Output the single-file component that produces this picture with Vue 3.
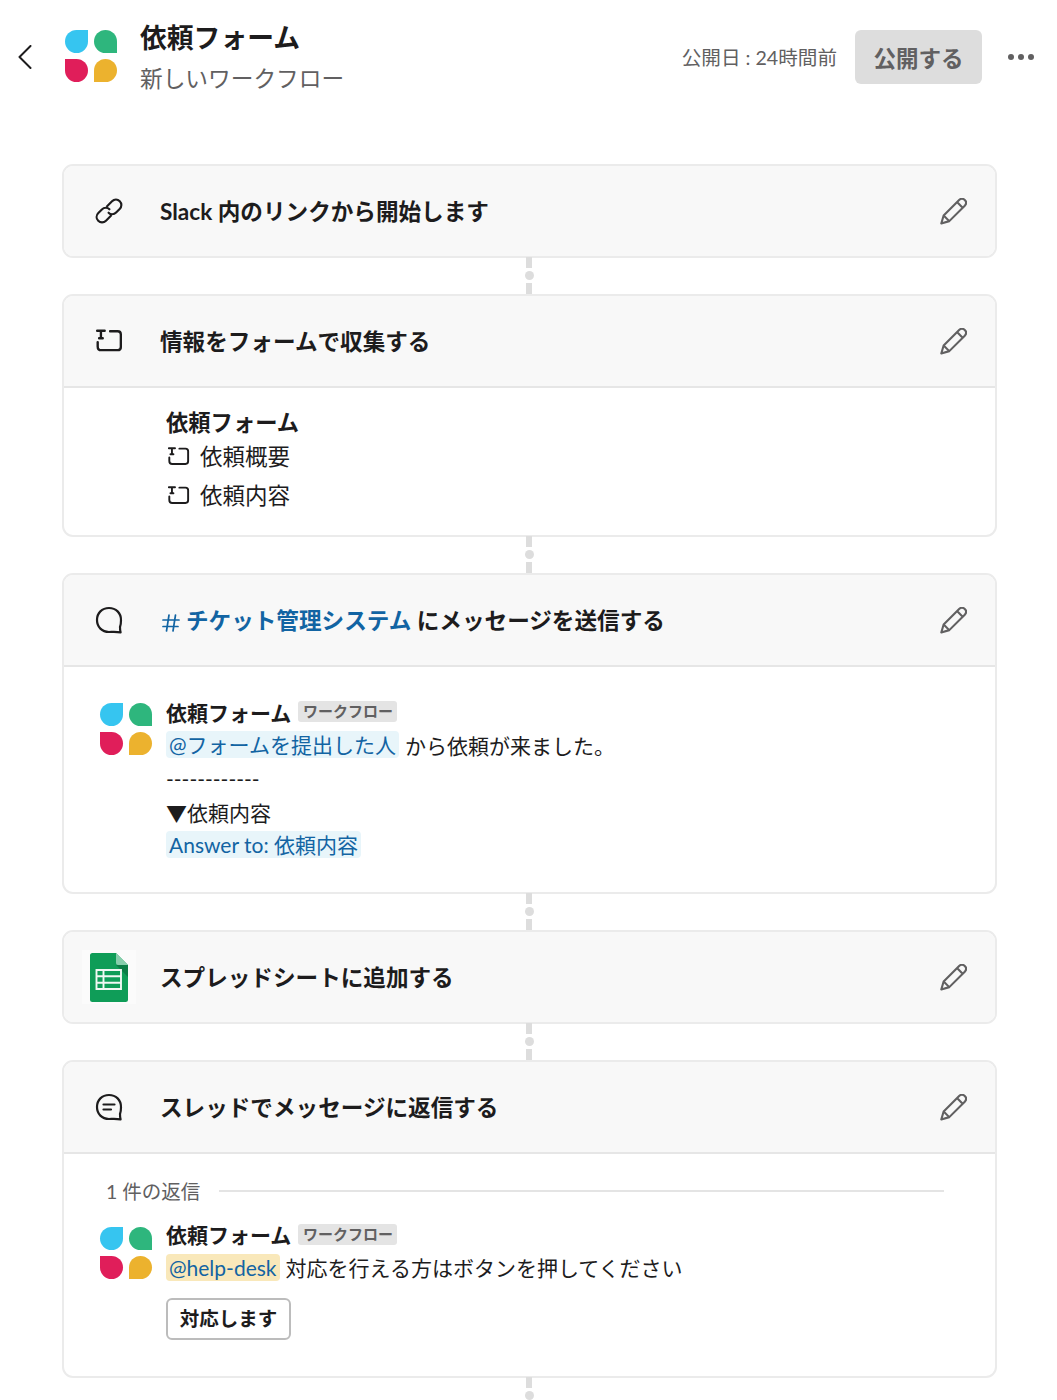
<script setup>
const logoParts = ['blue', 'green', 'red', 'yellow']
const pencilPath = 'M3 23.2 L5 16.4 L18.2 3.2 C19.6 1.8 21.6 1.8 23 3.2 C24.4 4.6 24.4 6.6 23 8 L9.8 21.2 Z M16.4 5 L21.2 9.8 M5 16.4 L9.8 21.2'
const formPath = 'M2 2.5 H9 M5.5 2.5 V9.5 M3.8 9.5 H7.2 M2.5 13 V17 C2.5 19.2 3.6 20.5 5.8 20.5 H21 C23 20.5 24 19.5 24 17.5 V6 C24 4 23 3 21 3 H14'
</script>

<template>
  <div class="page">
    <header class="top">
      <svg class="back" width="14" height="24" viewBox="0 0 14 24" fill="none">
        <path d="M12.5 1 L1.5 12 L12.5 23" stroke="#1d1c1d" stroke-width="2" stroke-linecap="round" stroke-linejoin="round" />
      </svg>
      <div class="logo">
        <i v-for="p in logoParts" :key="p" :class="p"></i>
      </div>
      <div class="app-names">
        <div class="app-name">依頼フォーム</div>
        <div class="app-sub">新しいワークフロー</div>
      </div>
      <div class="date">公開日 : 24時間前</div>
      <button class="publish"><span>公開する</span></button>
      <div class="dots"><i></i><i></i><i></i></div>
    </header>

    <section class="card">
      <div class="head">
        <svg class="ico" width="28" height="28" viewBox="1 1 26 26" fill="none" stroke="#1d1c1d" stroke-width="2" stroke-linecap="round">
          <path d="M12.2 9.6 L16.8 5 C18.9 2.9 22 2.9 24 4.9 C26 6.9 26 10 23.9 12.1 L20.6 15.4 C18.500 17.500 15.400 17.500 13.600 15.600" />
          <path d="M15.800 18.400 L11.200 23 C9.100 25.100 6 25.100 4 23.100 C2 21.100 2 18 4.100 15.900 L7.400 12.600 C9.500 10.500 12.600 10.500 14.400 12.400" />
        </svg>
        <div class="title">Slack 内のリンクから開始します</div>
        <svg class="pen" width="27" height="27" viewBox="2 1.500 22.800 23" fill="none" stroke="#616061" stroke-width="1.800" stroke-linejoin="round"><path :d="pencilPath" /></svg>
      </div>
    </section>
    <div class="link"><i></i><b></b><i></i></div>

    <section class="card">
      <div class="head ruled">
        <svg class="ico" width="28" height="28" viewBox="0 0 26 24" fill="none" stroke="#1d1c1d" stroke-width="2.200" stroke-linecap="round"><path :d="formPath" /></svg>
        <div class="title">情報をフォームで収集する</div>
        <svg class="pen" width="27" height="27" viewBox="2 1.500 22.800 23" fill="none" stroke="#616061" stroke-width="1.800" stroke-linejoin="round"><path :d="pencilPath" /></svg>
      </div>
      <div class="form-body">
        <div class="form-name">依頼フォーム</div>
        <div class="field">
          <svg width="23" height="21" viewBox="0 0 26 24" fill="none" stroke="#1d1c1d" stroke-width="2.200" stroke-linecap="round"><path :d="formPath" /></svg>
          <span>依頼概要</span>
        </div>
        <div class="field">
          <svg width="23" height="21" viewBox="0 0 26 24" fill="none" stroke="#1d1c1d" stroke-width="2.200" stroke-linecap="round"><path :d="formPath" /></svg>
          <span>依頼内容</span>
        </div>
      </div>
    </section>
    <div class="link"><i></i><b></b><i></i></div>

    <section class="card">
      <div class="head ruled">
        <svg class="ico" width="28" height="28" viewBox="0 0 28 28" fill="none" stroke="#1d1c1d" stroke-width="2.200" stroke-linejoin="round">
          <path d="M14 2 C7 2 2 7 2 14 C2 21 7 26 14 26 C17 26 20 25.400 25.600 26.400 C25 24.400 25 22.600 25 21 C25.800 19 26 16.600 26 14 C26 7 21 2 14 2 Z" />
        </svg>
        <div class="title">
          <span class="chan"><svg class="hash" width="18" height="18" viewBox="0 0 18 18" fill="none" stroke="#1264a3" stroke-width="1.700" stroke-linecap="round"><path d="M1 6 H17 M1 12.500 H16 M7 1 L4.500 17 M13.500 1 L11 17" /></svg>チケット管理システム</span> にメッセージを送信する
        </div>
        <svg class="pen" width="27" height="27" viewBox="2 1.500 22.800 23" fill="none" stroke="#616061" stroke-width="1.800" stroke-linejoin="round"><path :d="pencilPath" /></svg>
      </div>
      <div class="msg-body">
        <div class="msg">
          <div class="logo">
            <i v-for="p in logoParts" :key="p" :class="p"></i>
          </div>
          <div class="msg-text">
            <div class="line"><strong>依頼フォーム</strong><span class="badge">ワークフロー</span></div>
            <div class="line"><span class="mention">@フォームを提出した人</span><span class="after">から依頼が来ました。</span></div>
            <div class="line">------------</div>
            <div class="line">▼依頼内容</div>
            <div class="line"><span class="mention">Answer to: 依頼内容</span></div>
          </div>
        </div>
      </div>
    </section>
    <div class="link"><i></i><b></b><i></i></div>

    <section class="card">
      <div class="head">
        <div class="sheet-wrap">
          <svg width="38" height="49" viewBox="0 0 38 49">
            <path d="M2.500 0 H26 L38 12 V46.500 A2.500 2.500 0 0 1 35.500 49 H2.500 A2.500 2.500 0 0 1 0 46.500 V2.500 A2.500 2.500 0 0 1 2.500 0 Z" fill="#0f9d58" />
            <path d="M26 12 L38 24 V12 Z" fill="#0b7d46" />
            <path d="M26 0 L38 12 H28 A2 2 0 0 1 26 10 Z" fill="#87ceac" />
            <path d="M6.500 17 H31 V36 H6.500 Z M6.500 23.300 H31 M6.500 29.700 H31 M13.500 17 V36" fill="none" stroke="#f1f8f4" stroke-width="1.900" />
          </svg>
        </div>
        <div class="title">スプレッドシートに追加する</div>
        <svg class="pen" width="27" height="27" viewBox="2 1.500 22.800 23" fill="none" stroke="#616061" stroke-width="1.800" stroke-linejoin="round"><path :d="pencilPath" /></svg>
      </div>
    </section>
    <div class="link"><i></i><b></b><i></i></div>

    <section class="card">
      <div class="head ruled">
        <svg class="ico" width="28" height="28" viewBox="0 0 28 28" fill="none" stroke="#1d1c1d" stroke-width="2.200" stroke-linejoin="round" stroke-linecap="round">
          <path d="M14 2 C7 2 2 7 2 14 C2 21 7 26 14 26 C17 26 20 25.400 25.600 26.400 C25 24.400 25 22.600 25 21 C25.800 19 26 16.600 26 14 C26 7 21 2 14 2 Z" />
          <path d="M8.500 11.500 H19.500 M8.500 16.500 H16" />
        </svg>
        <div class="title">スレッドでメッセージに返信する</div>
        <svg class="pen" width="27" height="27" viewBox="2 1.500 22.800 23" fill="none" stroke="#616061" stroke-width="1.800" stroke-linejoin="round"><path :d="pencilPath" /></svg>
      </div>
      <div class="reply-body">
        <div class="reply-count"><span>1 件の返信</span><hr /></div>
        <div class="msg">
          <div class="logo">
            <i v-for="p in logoParts" :key="p" :class="p"></i>
          </div>
          <div class="msg-text">
            <div class="line"><strong>依頼フォーム</strong><span class="badge">ワークフロー</span></div>
            <div class="line"><span class="mention warm">@help-desk</span><span class="after">対応を行える方はボタンを押してください</span></div>
            <button class="action">対応します</button>
          </div>
        </div>
      </div>
    </section>
    <div class="link"><i></i><b></b><i></i></div>
  </div>
</template>

<style scoped>
.page {
  box-sizing: border-box;
  width: 1057px;
  height: 1400px;
  overflow: hidden;
  padding: 0 60px 0 62px;
  background: #fff;
  color: #1d1c1d;
  font-family: "Lato", "Noto Sans CJK JP", sans-serif;
}
.top {
  display: flex;
  align-items: center;
  height: 114px;
  margin: 0 -37px 50px -44px;
}
.back { flex: none; }
.logo {
  flex: none;
  display: grid;
  grid-template-columns: 23px 23px;
  grid-auto-rows: 23px;
  gap: 6px;
}
.logo i { display: block; border-radius: 50%; }
.logo .blue { background: #36c5f0; border-top-right-radius: 0; }
.logo .green { background: #2eb67d; border-bottom-right-radius: 0; }
.logo .red { background: #e01e5a; border-top-left-radius: 0; }
.logo .yellow { background: #ecb22e; border-bottom-left-radius: 0; }
.top .logo { margin: -3px 0 0 33px; }
.app-names { margin-left: 23px; flex: 1; padding-top: 3px; }
.app-name { font-size: 26.800px; font-weight: 700; line-height: 38px; }
.app-sub { font-size: 22.700px; line-height: 38px; margin-top: 3px; color: #616061; }
.date { font-size: 19.600px; color: #616061; white-space: nowrap; padding-bottom: 2px; }
.publish {
  width: 127px;
  height: 54px;
  margin-left: 18px;
  padding: 0 0 1px;
  border: none;
  border-radius: 6px;
  background: #dddddd;
  color: #616061;
  font: 700 22.500px "Lato", "Noto Sans CJK JP", sans-serif;
}
.dots { display: flex; gap: 4px; margin-left: 26px; width: 26px; }
.dots i { width: 6px; height: 6px; border-radius: 50%; background: #616061; flex: none; }
.card {
  border: 2px solid #ebebeb;
  border-radius: 11px;
  overflow: hidden;
  background: #fff;
}
.head {
  box-sizing: border-box;
  display: flex;
  align-items: center;
  height: 90px;
  padding: 0 28px 0 31px;
  background: #f8f8f8;
}
.head.ruled { height: 92px; border-bottom: 2px solid #e6e6e6; }
.ico { flex: none; }
.title { flex: 1; margin: 0 0 1px 37px; font-size: 22.600px; font-weight: 700; white-space: nowrap; }
.pen { flex: none; }
.chan { color: #1264a3; }
.hash { margin: 0 6px 0 2px; vertical-align: -3px; }
.sheet-wrap {
  flex: none;
  width: 54px;
  height: 54px;
  margin: 0 -13px;
  display: flex;
  align-items: center;
  justify-content: center;
  background: #fbfbfb;
}
.link {
  display: flex;
  flex-direction: column;
  align-items: center;
  height: 37px;
  margin: -1px 0 0 -1px;
  gap: 3px;
}
.link i { flex: none; width: 6px; height: 11px; background: #dddddd; }
.link b { flex: none; width: 9px; height: 9px; border-radius: 50%; background: #dddddd; }
.form-body { height: 147px; box-sizing: border-box; padding: 18px 0 0 102px; }
.form-name { font-size: 22.300px; font-weight: 700; line-height: 34px; }
.field { display: flex; align-items: center; gap: 10px; height: 33px; font-size: 22.500px; padding-left: 1px; }
.field span { margin-top: -4px; }
.field + .field { margin-top: 6px; }
.msg-body { box-sizing: border-box; height: 225px; padding: 28px 0 0 36px; }
.msg { display: flex; gap: 14px; }
.msg-text { font-size: 21px; }
.msg .logo { margin-top: 8px; }
.line { display: flex; align-items: center; height: 33.300px; white-space: nowrap; }
.line strong { font-size: 21px; font-weight: 700; }
.badge {
  margin-left: 7px;
  padding: 0 4.500px;
  height: 21px;
  line-height: 21px;
  border-radius: 3px;
  background: #e4e4e4;
  color: #616061;
  font-size: 15px;
  font-weight: 700;
}
.mention {
  height: 27px;
  line-height: 27px;
  padding: 0 3px;
  border-radius: 4px;
  background: #e8f5fa;
  color: #1264a3;
}
.mention.warm { background: #f9e8ba; }
.after { margin-left: 6px; }
.reply-body { box-sizing: border-box; height: 222px; padding: 20px 51px 0 36px; }
.reply-body .msg .logo { margin-top: 9.500px; }
.reply-count { display: flex; align-items: center; gap: 19px; height: 34px; padding-left: 6px; color: #616061; font-size: 19.500px; margin-bottom: 9.500px; }
.reply-count span { flex: none; margin-top: -2px; }
.reply-count hr { flex: 1; margin: 0; border: none; border-top: 2px solid #e4e4e4; }
.action {
  display: block;
  box-sizing: border-box;
  width: 125px;
  height: 42px;
  margin-top: 13.500px;
  padding: 0 0 2px;
  background: #fff;
  border: 2px solid #bcbcbc;
  border-radius: 6px;
  color: #1d1c1d;
  font: 700 19.500px "Lato", "Noto Sans CJK JP", sans-serif;
}
</style>
